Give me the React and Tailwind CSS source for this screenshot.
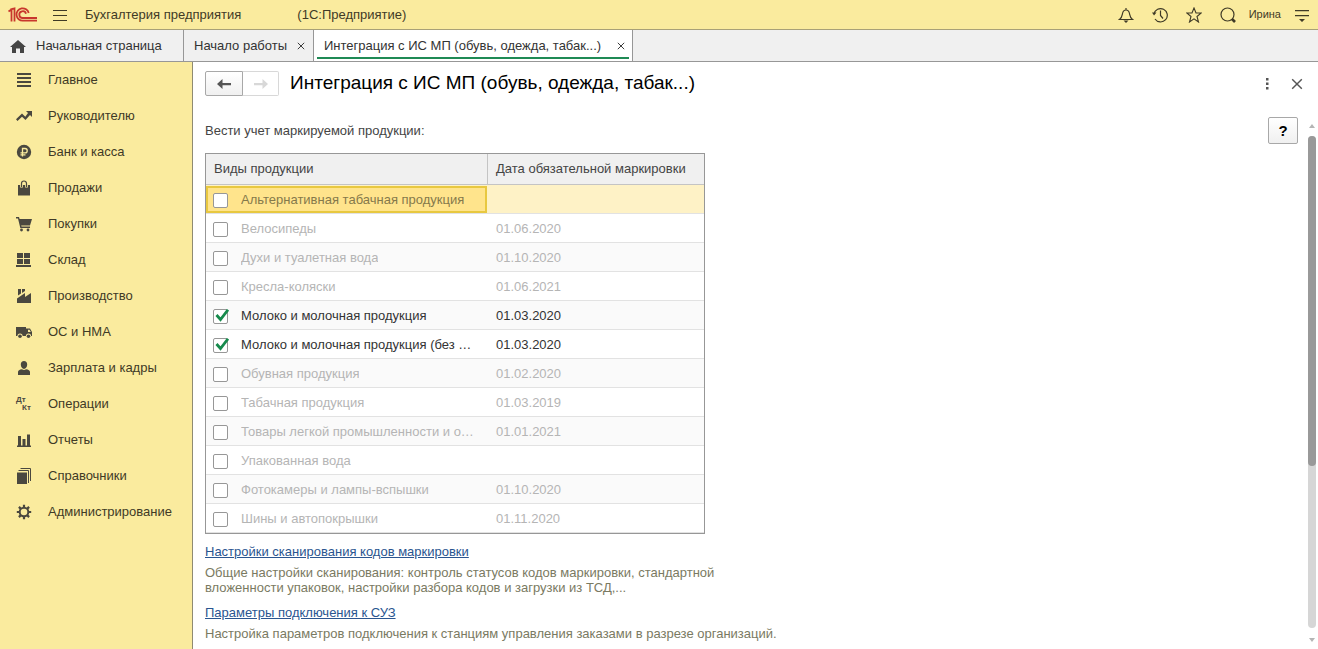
import { useState } from 'react'
import clsx from 'clsx'

const ICON = 'w-4 h-4 shrink-0'

// Иконки разделов
const icons = {
  main: (
    <svg viewBox="0 0 16 16" className={ICON} fill="currentColor">
      <path d="M1 1h14v2H1zM1 5h14v2H1zM1 9h14v2H1zM1 13h14v2H1z" />
    </svg>
  ),
  trend: (
    <svg viewBox="0 0 16 16" className={ICON} fill="currentColor">
      <path d="M10 3h6v6l-2-2-4.500 5-3.500-3.300L1.500 13 0 11.300 6 5.500 9.300 8.700 12 5z" />
    </svg>
  ),
  bank: (
    <svg viewBox="0 0 16 16" className={ICON}>
      <circle cx="8" cy="8" r="7.200" fill="currentColor" />
      <path d="M6.500 12.500V4.500H9a2.200 2.200 0 0 1 0 4.400H4.500M4.500 10.800h5" fill="none" stroke="#faeb9e" strokeWidth="1.300" />
    </svg>
  ),
  bag: (
    <svg viewBox="0 0 16 16" className={ICON}>
      <path d="M2 5h12v10.500H2z" fill="currentColor" />
      <path d="M5.500 7.500V3.500a2.500 2.500 0 0 1 5 0v4" fill="none" stroke="#faeb9e" strokeWidth="2.800" />
      <path d="M5.500 7V3.500a2.500 2.500 0 0 1 5 0V7" fill="none" stroke="currentColor" strokeWidth="1.200" />
    </svg>
  ),
  cart: (
    <svg viewBox="0 0 16 16" className={ICON} fill="currentColor">
      <path d="M0 1h3l.6 2H16l-2 6.500H5.200l.3 1H14V12H4.300L2 2.500H0z" />
      <circle cx="5.500" cy="14" r="1.400" />
      <circle cx="12" cy="14" r="1.400" />
    </svg>
  ),
  stock: (
    <svg viewBox="0 0 16 16" className={ICON} fill="currentColor">
      <path d="M1 1h6v5H1zM8 1h6v5H8zM1 7h6v5H1zM8 7h6v5H8zM0 13h15v2H0z" />
    </svg>
  ),
  factory: (
    <svg viewBox="0 0 16 16" className={ICON} fill="currentColor">
      <path d="M1 15v-4.500L9 5v4l6-4v10zM2 1h3v4.500L2 7.500zM6 1h3v2L6 5z" />
    </svg>
  ),
  truck: (
    <svg viewBox="0 0 16 16" className={ICON} fill="currentColor">
      <path d="M0 3h10v9H0z" />
      <path fillRule="evenodd" d="M10 4.500h4l2 3.500v4h-6zM12 5.700V8h2.800l-1.300-2.300z" />
      <circle cx="4" cy="12" r="2.600" fill="#faeb9e" />
      <circle cx="12.500" cy="12" r="2.600" fill="#faeb9e" />
      <circle cx="4" cy="12.200" r="1.800" />
      <circle cx="12.500" cy="12.200" r="1.800" />
    </svg>
  ),
  person: (
    <svg viewBox="0 0 16 16" className={ICON} fill="currentColor">
      <path d="M8 1c2 0 3.200 1.400 3.200 3.500C11.200 6.700 9.800 9 8 9S4.800 6.700 4.800 4.500C4.800 2.400 6 1 8 1zM2 15v-3c0-1.500 1.500-2.500 4-2.800 1.200 1 2.800 1 4 0 2.500.3 4 1.300 4 2.800v3z" />
    </svg>
  ),
  operations: (
    <span className="relative w-4 h-4 shrink-0 text-[8px] leading-none font-bold">
      <span className="absolute left-0 top-0">Дт</span>
      <span className="absolute left-1.5 top-2">Кт</span>
    </span>
  ),
  reports: (
    <svg viewBox="0 0 16 16" className={ICON} fill="currentColor">
      <path d="M2 4h3v10H2zM6.500 7h3v7h-3zM11 2.500h3V14h-3zM1 13.500h14V15H1z" />
    </svg>
  ),
  books: (
    <svg viewBox="0 0 16 16" className={ICON}>
      <path d="M1 4.500h10V16H1z" fill="currentColor" />
      <path d="M2.500 2.500h10v12.500M4.500 .5h10v12.500" fill="none" stroke="currentColor" />
    </svg>
  ),
  gear: (
    <svg viewBox="0 0 16 16" className={ICON} fill="none" stroke="currentColor">
      <circle cx="8" cy="8" r="4.300" strokeWidth="2" />
      <path
        d="M8 .8v2.700M8 12.500v2.700M.8 8h2.700M12.500 8h2.700M2.900 2.900l2 2M11.100 11.100l2 2M2.900 13.100l2-2M11.100 4.900l2-2"
        strokeWidth="2.200"
      />
    </svg>
  ),
}

const sections = [
  { icon: 'main', title: 'Главное' },
  { icon: 'trend', title: 'Руководителю' },
  { icon: 'bank', title: 'Банк и касса' },
  { icon: 'bag', title: 'Продажи' },
  { icon: 'cart', title: 'Покупки' },
  { icon: 'stock', title: 'Склад' },
  { icon: 'factory', title: 'Производство' },
  { icon: 'truck', title: 'ОС и НМА' },
  { icon: 'person', title: 'Зарплата и кадры' },
  { icon: 'operations', title: 'Операции' },
  { icon: 'reports', title: 'Отчеты' },
  { icon: 'books', title: 'Справочники' },
  { icon: 'gear', title: 'Администрирование' },
]

const initialProducts = [
  { name: 'Альтернативная табачная продукция', date: '', checked: false },
  { name: 'Велосипеды', date: '01.06.2020', checked: false },
  { name: 'Духи и туалетная вода', date: '01.10.2020', checked: false },
  { name: 'Кресла-коляски', date: '01.06.2021', checked: false },
  { name: 'Молоко и молочная продукция', date: '01.03.2020', checked: true },
  { name: 'Молоко и молочная продукция (без …', date: '01.03.2020', checked: true },
  { name: 'Обувная продукция', date: '01.02.2020', checked: false },
  { name: 'Табачная продукция', date: '01.03.2019', checked: false },
  { name: 'Товары легкой промышленности и о…', date: '01.01.2021', checked: false },
  { name: 'Упакованная вода', date: '', checked: false },
  { name: 'Фотокамеры и лампы-вспышки', date: '01.10.2020', checked: false },
  { name: 'Шины и автопокрышки', date: '01.11.2020', checked: false },
]

function Logo() {
  return (
    <svg viewBox="0 0 30 16" className="w-[30px] h-4 shrink-0" fill="none" stroke="#c8372d" strokeWidth="1.800">
      <path d="M0.500 4.500L3.500 2.500V14.500M3.200 4.500V2.300L6.500 1.500V14.500" />
      <path d="M20.700 6A6.200 6.200 0 1 0 15 13.700H29" />
      <path d="M18 6.800A3.400 3.400 0 1 0 15 11H29" />
    </svg>
  )
}

// Верхняя панель
function Header() {
  const button = 'flex w-[34px] h-full items-center justify-center'
  return (
    <header className="flex h-[30px] shrink-0 items-center border-b border-[#a8a077] bg-[#faeb9e] pl-2 text-[#3f3a26]">
      <Logo />
      <button aria-label="Меню" className="ml-3.5 flex h-full w-4 items-center">
        <svg viewBox="0 0 16 12" className="w-4 h-3" stroke="currentColor" strokeWidth="1.200">
          <path d="M1 1.500h14M1 6.500h14M1 11.500h14" />
        </svg>
      </button>
      <span className="ml-[17px]">Бухгалтерия предприятия</span>
      <span className="ml-14">(1С:Предприятие)</span>
      <div className="ml-auto flex h-full items-center">
        <button aria-label="Уведомления" className={button}>
          <svg viewBox="0 0 16 16" className="w-4 h-4" fill="none" stroke="currentColor" strokeWidth="1.200">
            <path d="M1.500 12.500c2.500-1.800 2.500-3.500 3-6C5 4 6.300 3 8 3s3 1 3.500 3.500c.5 2.500.5 4.200 3 6zM8 3V1" />
            <path d="M5.500 13.500h5L8 16z" fill="currentColor" stroke="none" />
          </svg>
        </button>
        <button aria-label="История" className={button}>
          <svg viewBox="0 0 16 16" className="w-4 h-4" fill="none" stroke="currentColor" strokeWidth="1.200">
            <path d="M2 7a6.700 6.700 0 1 1 1 5M8.500 3.500v5l2.500 3" />
            <path d="M0 5.500h4.500L2 8.500z" fill="currentColor" stroke="none" />
          </svg>
        </button>
        <button aria-label="Избранное" className={button}>
          <svg viewBox="0 0 16 16" className="w-4 h-4" fill="none" stroke="currentColor" strokeWidth="1.100">
            <path d="M8 1l2 5h5.200l-4.200 3.500 1.500 5.500L8 11.900 3.500 15 5 9.500.8 6H6z" />
          </svg>
        </button>
        <button aria-label="Поиск" className={button}>
          <svg viewBox="0 0 16 16" className="w-4 h-4" fill="none" stroke="currentColor">
            <circle cx="7.500" cy="7.500" r="6.500" strokeWidth="1.200" />
            <path d="M12 12l3 3" strokeWidth="2.600" />
          </svg>
        </button>
        <button className="ml-1 text-[11px]">Ирина</button>
        <button aria-label="Настройки" className="ml-1 flex h-full w-[33px] items-center justify-center">
          <svg viewBox="0 0 16 16" className="w-4 h-4" fill="currentColor">
            <path d="M1 3h14v1.200H1zM1 8h14v1.200H1zM5 12h6l-3 3z" />
          </svg>
        </button>
      </div>
    </header>
  )
}

function Cross({ className }) {
  return (
    <svg viewBox="0 0 10 10" className={className} stroke="currentColor" strokeWidth="1.200">
      <path d="M1 1l8 8M9 1l-8 8" />
    </svg>
  )
}

// Вкладки открытых окон
function Tabs() {
  return (
    <nav className="flex h-8 shrink-0 border-b border-[#979797] bg-[#f0f0f0] text-[#333]">
      <button className="flex w-[184px] items-center gap-2.5 border-r border-[#979797] pl-2.5">
        <svg viewBox="0 0 16 14" className="w-4 h-3.5" fill="#444">
          <path d="M8 1l8 7h-2v6h-4V9.500H6V14H2V8H0z" />
        </svg>
        Начальная страница
      </button>
      <div className="flex w-[130px] items-center justify-between border-r border-[#979797] pl-2.5 pr-2">
        <button>Начало работы</button>
        <button aria-label="Закрыть вкладку">
          <Cross className="w-2 h-2" />
        </button>
      </div>
      <div className="flex w-[319px] border-r border-[#979797] bg-white px-[3px]">
        <div className="mb-0.5 flex grow items-center justify-between border-b-2 border-[#1f8a55] pt-1 pl-[7px] pr-1">
          <button>Интеграция с ИС МП (обувь, одежда, табак...)</button>
          <button aria-label="Закрыть вкладку">
            <Cross className="w-2 h-2" />
          </button>
        </div>
      </div>
    </nav>
  )
}

function Sidebar() {
  return (
    <aside className="w-[193px] shrink-0 border-r border-[#8f8b72] bg-[#faeb9e] text-[#3f3a26]">
      {sections.map((s) => (
        <a key={s.title} href="#" className="flex h-9 items-center gap-4 pl-4">
          <span className="flex text-[#4a483f]">{icons[s.icon]}</span>
          <span className="pb-0.5">{s.title}</span>
        </a>
      ))}
    </aside>
  )
}

function ProductTable() {
  const [products, setProducts] = useState(initialProducts)

  const toggle = (index) => {
    setProducts(products.map((p, i) => (i === index ? { ...p, checked: !p.checked } : p)))
  }

  return (
    <table className="w-[500px] table-fixed border-separate border-spacing-0 border border-[#979797]">
      <thead>
        <tr className="h-[31px] bg-[#f0f0f0] text-left text-[#444]">
          <th className="w-[282px] border-r border-b border-[#c4c4c4] px-2 pb-0.5 font-normal">Виды продукции</th>
          <th className="whitespace-nowrap border-b border-[#c4c4c4] px-2 pb-0.5 font-normal">
            Дата обязательной маркировки
          </th>
        </tr>
      </thead>
      <tbody>
        {products.map((p, i) => (
          <tr
            key={p.name}
            className={clsx(
              'h-[29px]',
              i === 0 ? 'bg-[#fef2c6] text-[#85794b]' : p.checked ? 'text-[#333]' : 'text-[#b5b5b5]',
              i > 0 && i % 2 === 0 && 'bg-[#fafafa]',
            )}
          >
            <td className="border-b border-[#e2e2e2] p-0">
              <label
                className={clsx(
                  'flex items-center gap-[13px]',
                  i === 0 ? 'mt-px mr-px h-[27px] border-2 border-[#e8c840] bg-[#ffe48c] pl-[5px]' : 'h-7 pl-[7px]',
                )}
              >
                <span className="relative flex shrink-0 pt-0.5">
                  <input
                    type="checkbox"
                    checked={p.checked}
                    onChange={() => toggle(i)}
                    className="h-[15px] w-[15px] appearance-none rounded-xs border border-[#979797] bg-white"
                  />
                  {p.checked && (
                    <svg viewBox="0 0 14 14" className="absolute left-0.5 top-0.5 w-3.5 h-3.5" fill="none" stroke="#168a4c" strokeWidth="2.800">
                      <path d="M1.500 6l4 4.500L13 .8" />
                    </svg>
                  )}
                </span>
                <span className="truncate">{p.name}</span>
              </label>
            </td>
            <td className="border-b border-[#e2e2e2] px-2 py-0">{p.date}</td>
          </tr>
        ))}
      </tbody>
    </table>
  )
}

function ScrollBar() {
  return (
    <div className="flex w-2 shrink-0 flex-col items-center">
      <svg viewBox="0 0 8 5" className="w-2 h-[5px]" fill="#b5b5b5">
        <path d="M1 5l3-4 3 4z" />
      </svg>
      <div className="mt-2 mb-2.5 w-2 grow rounded-full bg-[#d6d6d6]">
        <div className="h-[67%] rounded-full bg-[#999]" />
      </div>
      <svg viewBox="0 0 8 5" className="w-2 h-[5px]" fill="#b5b5b5">
        <path d="M1 0l3 4 3-4z" />
      </svg>
    </div>
  )
}

export default function App() {
  return (
    <div className="flex h-screen flex-col overflow-hidden bg-white font-['Liberation_Sans',Arial,sans-serif] text-[13px] leading-[15px]">
      <Header />
      <Tabs />
      <div className="flex min-h-0 grow">
        <Sidebar />
        <main className="flex min-w-0 grow flex-col pl-3 pr-0.5">
          {/* Заголовок формы */}
          <div className="mt-2 flex h-[27px] shrink-0 items-center">
            <div className="flex h-[25px]">
              <button
                aria-label="Назад"
                className="flex w-[38px] items-center justify-center rounded-l-xs border border-[#a8a8a8] bg-linear-to-b from-white to-[#f0f0f0]"
              >
                <svg viewBox="0 0 14 10" className="w-3.5 h-2.5" fill="#555">
                  <path d="M0 5l5.500-5v4H14v2.200H5.500V10z" />
                </svg>
              </button>
              <button
                aria-label="Вперед"
                disabled
                className="flex w-9 items-center justify-center rounded-r-xs border border-l-0 border-[#d8d8d8]"
              >
                <svg viewBox="0 0 14 10" className="w-3.5 h-2.5" fill="#d8d8d8">
                  <path d="M14 5L8.500 0v4H0v2.200h8.500V10z" />
                </svg>
              </button>
            </div>
            <h1 className="ml-[11px] pb-0.5 text-[19px] leading-6 text-black">Интеграция с ИС МП (обувь, одежда, табак...)</h1>
            <button aria-label="Еще" className="ml-auto mr-[22px] text-[#555]">
              <svg viewBox="0 0 4 12" className="w-1 h-3" fill="currentColor">
                <path d="M1 0h2.500v2.500H1zM1 4.500h2.500V7H1zM1 9h2.500v2.500H1z" />
              </svg>
            </button>
            <button aria-label="Закрыть" className="mr-[13px] text-[#555]">
              <Cross className="w-3 h-3" />
            </button>
          </div>

          {/* Содержимое формы */}
          <div className="mt-3 flex min-h-0 grow">
            <div className="min-w-0 grow overflow-hidden pt-3.5 text-[#444]">
              <p>Вести учет маркируемой продукции:</p>
              <div className="mt-[15px]">
                <ProductTable />
              </div>
              <div className="mt-2.5 max-w-[590px] text-[#7a7a62]">
                <a href="#" className="text-[#2a5590] underline">
                  Настройки сканирования кодов маркировки
                </a>
                <p className="mt-1.5 max-w-[540px]">
                  Общие настройки сканирования: контроль статусов кодов маркировки, стандартной вложенности упаковок,
                  настройки разбора кодов и загрузки из ТСД,...
                </p>
                <p className="mt-2.5">
                  <a href="#" className="text-[#2a5590] underline">
                    Параметры подключения к СУЗ
                  </a>
                </p>
                <p className="mt-1.5">
                  Настройка параметров подключения к станциям управления заказами в разрезе организаций.
                </p>
              </div>
            </div>
            <button className="mt-2 mr-2.5 h-[27px] w-[30px] shrink-0 rounded-xs border border-[#a8a8a8] bg-linear-to-b from-white to-[#f0f0f0] text-[15px] font-bold text-black">
              ?
            </button>
            <div className="flex pt-3.5 pb-1.5">
              <ScrollBar />
            </div>
          </div>
        </main>
      </div>
    </div>
  )
}
